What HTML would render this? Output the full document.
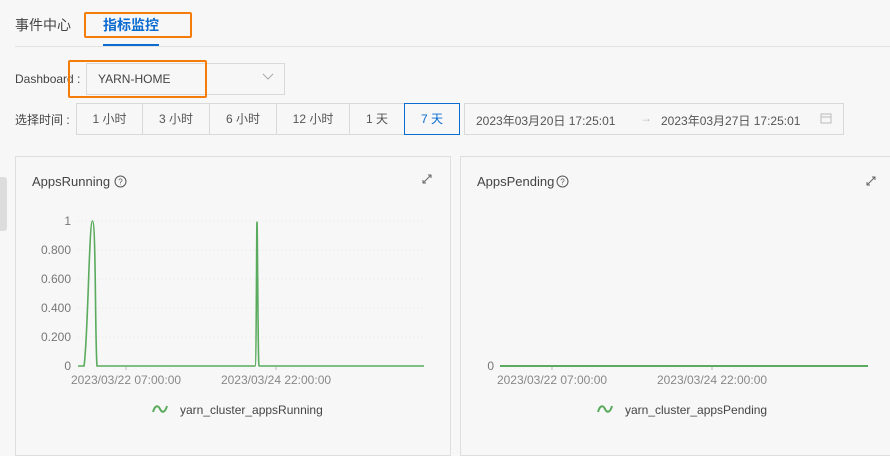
<!DOCTYPE html>
<html><head><meta charset="utf-8"><style>
*{margin:0;padding:0;box-sizing:border-box}
body{width:890px;height:443px;overflow:hidden;background:#f7f7f7;font-family:"Liberation Sans","Noto Sans CJK SC",sans-serif;font-size:12px;color:#333;position:relative}
.a{position:absolute;white-space:nowrap}
.btn{position:absolute;top:103px;height:32px;border:1px solid #d9d9d9;line-height:30px;text-align:center;color:#555;background:#f7f7f7}
.g{color:#888;font-size:12px}
</style></head><body>
<div class="a" style="left:15px;top:15px;font-size:14px;color:#444">事件中心</div>
<div class="a" style="left:103px;top:15px;font-size:14px;color:#0a6bd0;font-weight:bold">指标监控</div>
<div class="a" style="left:15px;top:46px;width:875px;height:1px;background:#e3e3e3"></div>
<div class="a" style="left:103px;top:44px;width:56px;height:2px;background:#0a6bd0"></div>
<div class="a" style="left:84px;top:12px;width:108px;height:26px;border:2px solid #f57c0a;border-radius:2px"></div>

<div class="a" style="left:15px;top:72px;color:#444">Dashboard :</div>
<div class="a" style="left:86px;top:63px;width:199px;height:32px;border:1px solid #d9d9d9"></div>
<div class="a" style="left:98px;top:72px;color:#444">YARN-HOME</div>
<svg class="a" style="left:262px;top:73px" width="12" height="8"><path d="M1 1 L6 6 L11 1" fill="none" stroke="#aaa" stroke-width="1"/></svg>
<div class="a" style="left:68px;top:60px;width:139px;height:38px;border:2px solid #f57c0a;border-radius:2px"></div>

<div class="a" style="left:15px;top:111px;color:#444">选择时间 :</div>
<div class="btn" style="left:76px;width:67px">1 小时</div>
<div class="btn" style="left:142px;width:68px">3 小时</div>
<div class="btn" style="left:209px;width:68px">6 小时</div>
<div class="btn" style="left:276px;width:74px">12 小时</div>
<div class="btn" style="left:349px;width:56px">1 天</div>
<div class="btn" style="left:404px;width:56px;border-color:#0a6bd0;color:#0a6bd0">7 天</div>
<div class="btn" style="left:464px;width:380px"></div>
<div class="a" style="left:476px;top:112px;color:#555">2023年03月20日 17:25:01</div>
<div class="a" style="left:640px;top:111px;color:#bbb">→</div>
<div class="a" style="left:661px;top:112px;color:#555">2023年03月27日 17:25:01</div>
<svg class="a" style="left:820px;top:112px" width="12" height="12"><rect x="1" y="2" width="10" height="9" fill="none" stroke="#bbb"/><line x1="1" y1="5" x2="11" y2="5" stroke="#bbb"/></svg>

<div class="a" style="left:0;top:177px;width:7px;height:54px;background:#ddd;border-radius:0 3px 3px 0"></div>

<div class="a" style="left:15px;top:156px;width:436px;height:300px;border:1px solid #dedede"></div>
<div class="a" style="left:460px;top:156px;width:440px;height:300px;border:1px solid #dedede"></div>

<div class="a" style="left:32px;top:174px;font-size:13px;color:#444">AppsRunning</div>
<svg class="a" style="left:114px;top:175px" width="13" height="13"><circle cx="6.5" cy="6.5" r="5.5" fill="none" stroke="#555"/><text x="6.5" y="9.5" font-size="8" text-anchor="middle" fill="#555" font-family="Liberation Sans">?</text></svg>
<div class="a" style="left:477px;top:174px;font-size:13px;color:#444">AppsPending</div>
<svg class="a" style="left:556px;top:175px" width="13" height="13"><circle cx="6.5" cy="6.5" r="5.5" fill="none" stroke="#555"/><text x="6.5" y="9.5" font-size="8" text-anchor="middle" fill="#555" font-family="Liberation Sans">?</text></svg>
<svg class="a" style="left:422px;top:174px" width="10" height="10"><path d="M1 9 L9 1 M6 1 H9 V4 M1 6 V9 H4" fill="none" stroke="#666"/></svg>
<svg class="a" style="left:866px;top:176px" width="10" height="10"><path d="M1 9 L9 1 M6 1 H9 V4 M1 6 V9 H4" fill="none" stroke="#666"/></svg>

<svg class="a" style="left:0;top:0" width="890" height="443">
<g stroke="#e4e4e4" stroke-dasharray="1,3">
<line x1="78" y1="221" x2="424" y2="221"/><line x1="78" y1="250" x2="424" y2="250"/><line x1="78" y1="279" x2="424" y2="279"/><line x1="78" y1="308" x2="424" y2="308"/><line x1="78" y1="337" x2="424" y2="337"/>
</g>
<g font-family="Liberation Sans" font-size="12" fill="#777" text-anchor="end">
<text x="71" y="225">1</text><text x="71" y="254">0.800</text><text x="71" y="283">0.600</text><text x="71" y="312">0.400</text><text x="71" y="341">0.200</text><text x="71" y="370">0</text>
<text x="494" y="370">0</text>
</g>
<g font-family="Liberation Sans" font-size="12" fill="#888" text-anchor="middle">
<text x="126" y="384">2023/03/22 07:00:00</text><text x="276" y="384">2023/03/24 22:00:00</text>
<text x="552" y="384">2023/03/22 07:00:00</text><text x="712" y="384">2023/03/24 22:00:00</text>
</g>
<line x1="126" y1="367" x2="126" y2="370" stroke="#bbb"/><line x1="276" y1="367" x2="276" y2="370" stroke="#bbb"/>
<line x1="552" y1="367" x2="552" y2="370" stroke="#bbb"/><line x1="712" y1="367" x2="712" y2="370" stroke="#bbb"/>
<path d="M78 366 H84 C88 340 89 221 92.5 221 C96 221 95 340 97 366 H255 C256.5 366 256.5 222 257 222 C257.5 222 258 366 259 366 H424" fill="none" stroke="#5aab5e" stroke-width="1.6"/>
<line x1="500" y1="366" x2="868" y2="366" stroke="#5aab5e" stroke-width="2"/>
<path d="M153 412 C155 405 158 405 160 409 C162 413 165 413 167 406" fill="none" stroke="#5aab5e" stroke-width="2"/>
<path d="M598 412 C600 405 603 405 605 409 C607 413 610 413 612 406" fill="none" stroke="#5aab5e" stroke-width="2"/>
<g font-family="Liberation Sans" font-size="12" fill="#444">
<text x="180" y="414">yarn_cluster_appsRunning</text><text x="625" y="414">yarn_cluster_appsPending</text>
</g>
</svg>
</body></html>
